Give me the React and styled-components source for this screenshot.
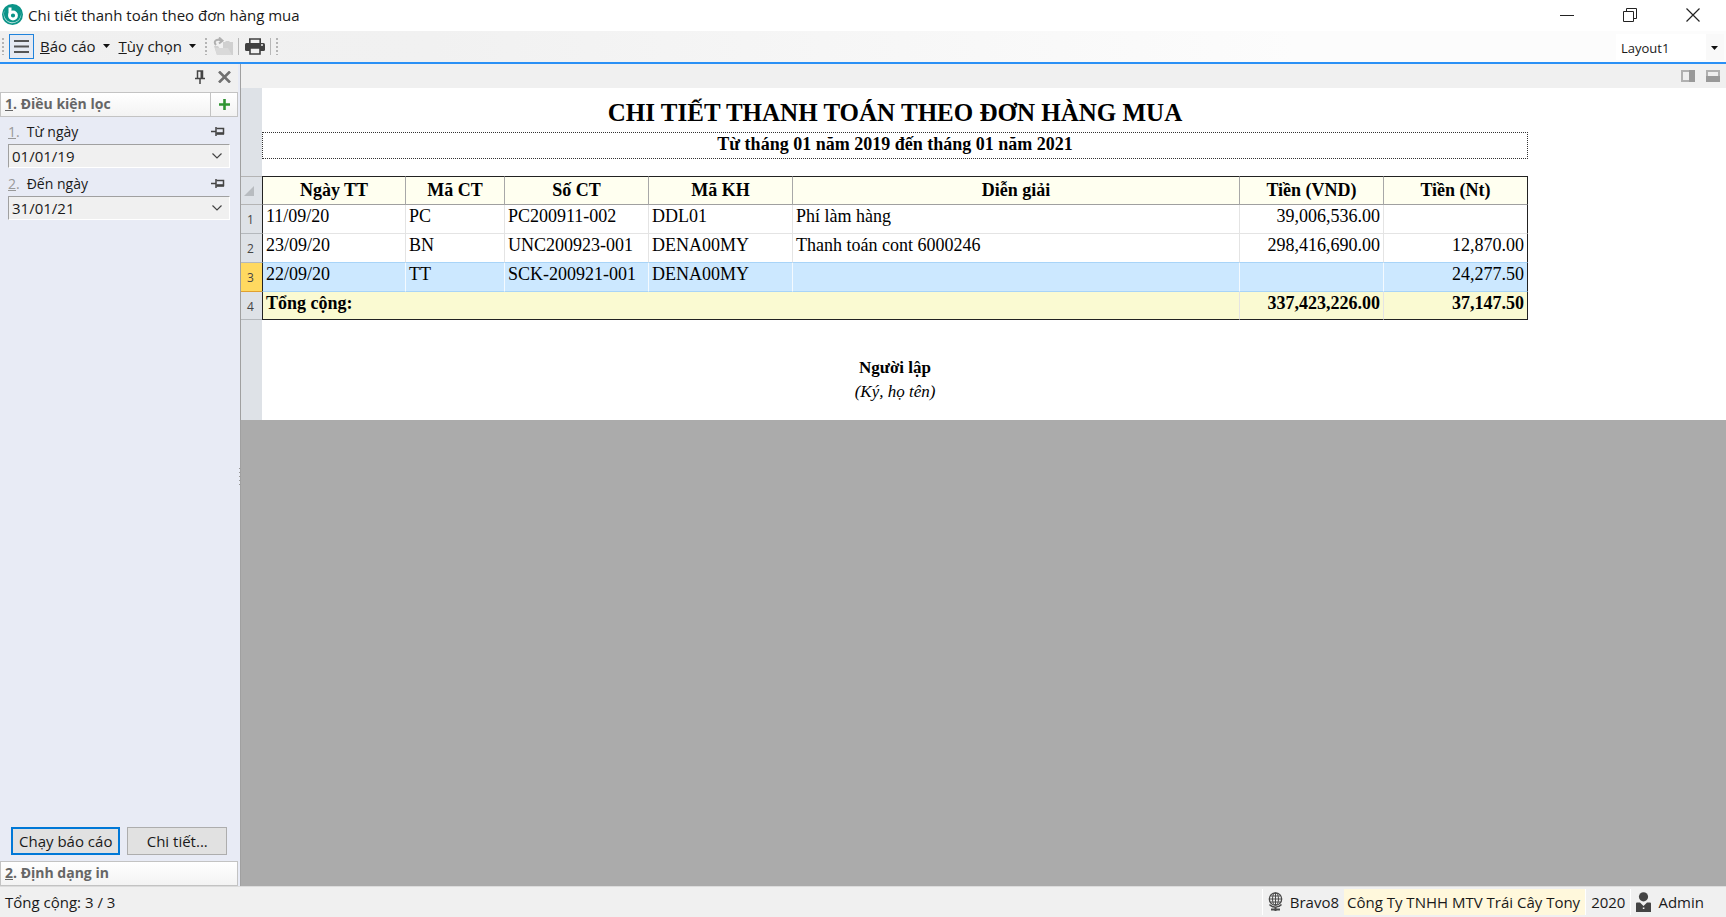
import React from 'react';
import styled, { createGlobalStyle, css } from 'styled-components';

const GlobalStyle = createGlobalStyle`
  * { box-sizing: border-box; }
  html, body, #root { height: 100%; margin: 0; }
  body { overflow: hidden; background: #f0f0f0; }
  body, button, input, select {
    font-family: "Open Sans", "Noto Sans", sans-serif;
    font-size: 15px;
    line-height: 20px;
    color: #1a1a1a;
  }
  svg { display: block; flex: none; }
`;

const Window = styled.div`
  display: flex;
  flex-direction: column;
  height: 100vh;
`;

const TitleBar = styled.header`
  display: flex;
  align-items: center;
  gap: 5px;
  height: 31px;
  padding: 0 2px 2px;
  background: #fff;
`;

const WindowTitle = styled.h1`
  flex: 1;
  margin: 0;
  font-size: 15px;
  font-weight: 400;
`;

const PlainButton = styled.button`
  display: flex;
  align-items: center;
  justify-content: center;
  padding: 0;
  border: 0;
  background: none;
`;

const Captions = styled.div`
  display: flex;
`;

const CaptionButton = styled(PlainButton)`
  width: 63px;
  height: 28px;
`;

const ToolBar = styled.div`
  display: flex;
  align-items: center;
  height: 33px;
  padding: 0 2px;
  background: linear-gradient(to right, #f0f0f0, #f1f1f1 25%, #fcfcfc 75%);
  border-bottom: 2px solid #2a90f5;
`;

const Grip = styled.span`
  width: 2px;
  height: 17px;
  background: repeating-linear-gradient(#b4b4b4 0 2px, transparent 2px 4px);
`;

const Divider = styled.span`
  width: 1px;
  height: 17px;
  background: #b8b8b8;
`;

const ListButton = styled(PlainButton)`
  width: 25px;
  height: 25px;
  margin: 0 6px 0 5px;
  border: 1px solid #1f83dc;
  background: #e6eaf2;
`;

const MenuButton = styled(PlainButton)`
  gap: 7px;
  margin-right: 9px;
  padding-bottom: 2px;
`;

const IconButton = styled(PlainButton)`
  width: 31px;
  height: 25px;
`;

const EndGrip = styled(Grip)`
  margin-left: 5px;
`;

const LayoutBox = styled.label`
  position: relative;
  display: flex;
  width: 108px;
  height: 26px;
  margin-left: auto;
  background: linear-gradient(to right, #fff 90px, #f9f9f9 90px);
  svg { position: absolute; right: 6px; top: 12px; pointer-events: none; }
`;

const LayoutSelect = styled.select`
  width: 100%;
  padding: 2px 24px 0 5px;
  border: 0;
  background: none;
  appearance: none;
  font-size: 13px;
`;

const Body = styled.div`
  display: flex;
  flex: 1;
  min-height: 0;
`;

const SideBar = styled.aside`
  display: flex;
  flex-direction: column;
  width: 241px;
  padding-right: 2px;
  background: #e8ebf5;
  border-right: 1px solid #a0a0a0;
`;

const SideTools = styled.div`
  display: flex;
  align-items: center;
  justify-content: flex-end;
  gap: 13px;
  height: 28px;
  padding: 0 7px 2px 0;
  background: #f0f0f0;
`;

const SectionBar = styled.div`
  display: flex;
  height: 25px;
  border: 1px solid #c3c3c3;
  background: linear-gradient(#fff, #f3f3f3);
`;

const SectionButton = styled.button`
  flex: 1;
  padding: 0 4px 2px;
  border: 0;
  background: none;
  text-align: left;
  font-size: 14px;
  font-weight: 700;
  color: #666;
`;

const AddButton = styled(PlainButton)`
  width: 27px;
  padding-bottom: 1px;
  border-left: 1px solid #c3c3c3;
`;

const Filters = styled.div`
  display: flex;
  flex: 1;
  flex-direction: column;
  padding: 3px 8px 0;
`;

const FieldHead = styled.div`
  display: flex;
  align-items: center;
  gap: 7px;
  height: 24px;
  padding: 0 5px 1px 0;
  label { flex: 1; font-size: 14px; }
`;

const FieldNumber = styled.span`
  font-size: 14px;
  color: #999;
`;

const FieldBox = styled.div`
  display: flex;
  height: 24px;
  margin-bottom: 4px;
  border: 1px solid #fff;
  border-top-color: #a0a0a0;
  border-left-color: #a0a0a0;
  background: #f0f0f0;
`;

const FieldInput = styled.input`
  flex: 1;
  min-width: 0;
  padding: 0 3px;
  border: 0;
  background: none;
`;

const DropButton = styled(PlainButton)`
  width: 24px;
`;

const Actions = styled.div`
  display: flex;
  gap: 7px;
  padding: 0 11px 6px;
`;

const ActionButton = styled.button`
  width: ${(p) => (p.$primary ? 110 : 100)}px;
  height: 28px;
  padding: 0;
  border: ${(p) => (p.$primary ? '2px solid #0078d7' : '1px solid #adadad')};
  background: #e1e1e1;
`;

const Main = styled.main`
  position: relative;
  flex: 1;
  min-width: 0;
  background: #ababab;
`;

const ViewTools = styled.div`
  display: flex;
  align-items: center;
  justify-content: flex-end;
  gap: 11px;
  height: 24px;
  padding-right: 6px;
  background: #f0f0f0;
`;

const SplitGrip = styled.span`
  position: absolute;
  left: -2px;
  top: 404px;
  width: 1px;
  height: 20px;
  background: repeating-linear-gradient(#999 0 1px, transparent 1px 4px);
`;

const Sheet = styled.section`
  height: 332px;
  padding: 10px 198px 0 0;
  background: linear-gradient(to right, #dee2e7 21px, #fff 21px);
  font-family: "Liberation Serif", serif;
  font-size: 18px;
  color: #000;
`;

const ReportTitle = styled.h2`
  margin: 0 0 4px 21px;
  font-size: 25px;
  line-height: 30px;
  text-align: center;
`;

const Period = styled.p`
  height: 27px;
  margin: 0 0 17px 21px;
  border: 1px dotted #333;
  font-weight: 700;
  line-height: 22px;
  text-align: center;
`;

const Grid = styled.table`
  width: 100%;
  table-layout: fixed;
  border-spacing: 0;
`;

const Col = styled.col`
  width: ${(p) => (p.$w ? `${p.$w}px` : 'auto')};
`;

const frame = css`
  &:nth-child(2) { border-left: 1px solid #222; }
  &:last-child { border-right: 1px solid #222; }
`;

const HeadCell = styled.th`
  height: 29px;
  padding: 0 0 2px;
  border-top: 1px solid #222;
  border-right: 1px solid #a8a8a8;
  border-bottom: 1px solid #a0a0a0;
  background: #fffff0;
  line-height: 20px;
  ${frame}
`;

const CornerCell = styled.td`
  padding: 0 0 0 3px;
  border-top: 1px solid #b4b4b4;
  border-bottom: 1px solid #b4b4b4;
`;

const RowNumber = styled.th`
  padding: 2px 2px 0 0;
  border-bottom: 1px solid ${(p) => (p.$current ? '#e0a030' : '#b4b8bc')};
  background: ${(p) => (p.$current ? '#ffd960' : 'transparent')};
  font-family: "Open Sans", "Noto Sans", sans-serif;
  font-size: 12px;
  font-weight: 400;
  color: #444;
`;

const Cell = styled.td`
  height: ${(p) => (p.$total ? 28 : 29)}px;
  padding: 1px 3px 0;
  border-right: 1px solid ${(p) => (p.$current ? '#f4faff' : '#e4e4e4')};
  border-bottom: 1px solid ${(p) => (p.$total ? '#222' : p.$edge ? '#a8d4f8' : '#e4e4e4')};
  background: ${(p) => (p.$total ? '#fafad2' : p.$current ? '#cce8ff' : '#fff')};
  font-weight: ${(p) => (p.$total ? 700 : 400)};
  line-height: 20px;
  text-align: ${(p) => (p.$number ? 'right' : 'left')};
  vertical-align: top;
  white-space: nowrap;
  ${frame}
`;

const Signature = styled.div`
  padding: 36px 0 0 21px;
  text-align: center;
  font-size: 17px;
  line-height: 24px;
  strong, em { display: block; }
`;

const StatusBar = styled.footer`
  display: flex;
  align-items: center;
  height: 31px;
  padding: 0 17px 0 5px;
  border-top: 1px solid #dcdcdc;
  background: #f0f0f0;
`;

const StatusCount = styled.span`
  flex: 1;
`;

const StatusItem = styled.span`
  display: flex;
  align-items: center;
  gap: 7px;
  height: 26px;
  padding: 0 5px;
  border-left: 1px solid #fff;
`;

const Company = styled(StatusItem)`
  padding: 0 5px 0 3px;
  border: 0;
  background: #fff8dc;
`;

const Caret = () => (
  <svg width="7" height="4" viewBox="0 0 7 4"><path d="M0 0h7L3.500 4z" fill="#111" /></svg>
);

const Logo = () => (
  <svg width="21" height="21" viewBox="0 0 21 21">
    <circle cx="10.500" cy="10.500" r="10.500" fill="#0b9488" />
    <path d="M3.500 5A8.800 8.800 0 1 0 18.500 7 8.500 8.500 0 1 1 3.500 5z" fill="#fff" opacity=".8" />
    <path d="M8 3.500v9" stroke="#fff" strokeWidth="3" />
    <circle cx="11" cy="11.500" r="3.500" fill="#0b9488" stroke="#fff" strokeWidth="2.800" />
  </svg>
);

const PinIcon = () => (
  <svg width="10" height="14" viewBox="0 0 10 14" fill="none" stroke="#444">
    <path d="M2.500 8V1h5v7" strokeWidth="1.500" />
    <path d="M6.500 1v7" strokeWidth="2" />
    <path d="M0 8.500h10M5 9v5" strokeWidth="1.500" />
  </svg>
);

const SidePinIcon = () => (
  <svg width="14" height="11" viewBox="0 0 14 11" fill="none" stroke="#444">
    <path d="M0 5.500h5M5 1v9" strokeWidth="1.500" />
    <path d="M5.500 2.500h7v5h-7" strokeWidth="1.500" />
    <path d="M5.500 7.500h7.500" strokeWidth="2.500" />
  </svg>
);

const CrossIcon = () => (
  <svg width="13" height="12" viewBox="0 0 13 12" stroke="#707070" strokeWidth="2.600">
    <path d="M1 .5l11 11M12 .5l-11 11" />
  </svg>
);

const FolderIcon = () => (
  <svg width="20" height="19" viewBox="0 0 20 19">
    <path d="M1 9h4l2 3h3V5h2l1-1h3l1 1h3v13H4z" fill="#d0d0d0" />
    <path d="M2 11h13l4 7H4z" fill="#d9d9d9" />
    <path d="M3 8C-.5 4 4 1.500 8 3.500M6 .5l3.500 3.200L6 6.500" fill="none" stroke="#b0b0b0" strokeWidth="2" />
  </svg>
);

const PrinterIcon = () => (
  <svg width="20" height="17" viewBox="0 0 20 17">
    <path d="M4.800 5V1h10.400v4" fill="#f0f0f0" stroke="#404040" strokeWidth="1.600" />
    <rect x="0" y="5" width="20" height="8" rx="1.500" fill="#404040" />
    <circle cx="17" cy="7" r="1" fill="#f0f0f0" />
    <path d="M5 10h10v6H5z" fill="#f0f0f0" stroke="#404040" strokeWidth="1.600" />
  </svg>
);

const GlobeIcon = () => (
  <svg width="15" height="20" viewBox="0 0 15 20" fill="none" stroke="#4a4a4a">
    <circle cx="7.500" cy="7" r="6.200" strokeWidth="1.300" />
    <ellipse cx="7.500" cy="7" rx="3" ry="6.200" />
    <path d="M7.500 1v12M1.500 7h12M2.500 4h10M2.500 10h10" />
    <path d="M1.500 12.500c3 3.500 9 3.500 12 0" strokeWidth="1.400" />
    <path d="M7.500 15v4M3 17.500h9" strokeWidth="2" />
  </svg>
);

const UserIcon = () => (
  <svg width="15" height="20" viewBox="0 0 15 20" fill="#444">
    <circle cx="7.500" cy="4.800" r="4.600" />
    <path d="M1 10.500h3l3.500 3.500 3.500-3.500h3q1 0 1 1V20H0v-8.500q0-1 1-1z" />
    <path d="M6.800 15.500h1.600v1.500H6.800z" fill="#f0f0f0" />
  </svg>
);

const columns = [
  { title: 'Ngày TT', width: 144 },
  { title: 'Mã CT', width: 99 },
  { title: 'Số CT', width: 144 },
  { title: 'Mã KH', width: 144 },
  { title: 'Diễn giải' },
  { title: 'Tiền (VND)', width: 144, number: true },
  { title: 'Tiền (Nt)', width: 144, number: true },
];

const rows = [
  ['11/09/20', 'PC', 'PC200911-002', 'DDL01', 'Phí làm hàng', '39,006,536.00', ''],
  ['23/09/20', 'BN', 'UNC200923-001', 'DENA00MY', 'Thanh toán cont 6000246', '298,416,690.00', '12,870.00'],
  ['22/09/20', 'TT', 'SCK-200921-001', 'DENA00MY', '', '', '24,277.50'],
];
const currentRow = 2;

function DateField({ id, number, label, value }) {
  return (
    <div>
      <FieldHead>
        <FieldNumber><u>{number}</u>.</FieldNumber>
        <label htmlFor={id}>{label}</label>
        <PlainButton aria-label="Ghim"><SidePinIcon /></PlainButton>
      </FieldHead>
      <FieldBox>
        <FieldInput id={id} defaultValue={value} />
        <DropButton aria-label="Chọn ngày">
          <svg width="10" height="6" viewBox="0 0 10 6" fill="none" stroke="#444" strokeWidth="1.200"><path d="M.5 .5L5 5 9.500 .5" /></svg>
        </DropButton>
      </FieldBox>
    </div>
  );
}

function ReportGrid() {
  return (
    <Grid>
      <colgroup>
        <Col $w={21} />
        {columns.map((c) => <Col key={c.title} $w={c.width} />)}
      </colgroup>
      <thead>
        <tr>
          <CornerCell>
            <svg width="10" height="10" viewBox="0 0 10 10"><path d="M10 0v10H0z" fill="#b8bcc0" /></svg>
          </CornerCell>
          {columns.map((c) => <HeadCell key={c.title} scope="col">{c.title}</HeadCell>)}
        </tr>
      </thead>
      <tbody>
        {rows.map((row, r) => (
          <tr key={row[2]}>
            <RowNumber scope="row" $current={r === currentRow}>{r + 1}</RowNumber>
            {row.map((text, c) => (
              <Cell
                key={columns[c].title}
                $number={columns[c].number}
                $current={r === currentRow}
                $edge={r === currentRow || r === currentRow - 1}
              >
                {text}
              </Cell>
            ))}
          </tr>
        ))}
        <tr>
          <RowNumber scope="row">4</RowNumber>
          <Cell $total colSpan={5}>Tổng cộng:</Cell>
          <Cell $total $number>337,423,226.00</Cell>
          <Cell $total $number>37,147.50</Cell>
        </tr>
      </tbody>
    </Grid>
  );
}

export default function App() {
  return (
    <Window>
      <GlobalStyle />
      <TitleBar>
        <Logo />
        <WindowTitle>Chi tiết thanh toán theo đơn hàng mua</WindowTitle>
        <Captions>
          <CaptionButton aria-label="Thu nhỏ">
            <svg width="14" height="14" viewBox="0 0 14 14" stroke="#222"><path d="M0 7.500h14" /></svg>
          </CaptionButton>
          <CaptionButton aria-label="Khôi phục">
            <svg width="14" height="14" viewBox="0 0 14 14" fill="none" stroke="#222"><path d="M.5 3.500h10v10H.5zM3.500 3.500v-3h10v10h-3" /></svg>
          </CaptionButton>
          <CaptionButton aria-label="Đóng">
            <svg width="14" height="14" viewBox="0 0 14 14" stroke="#222" strokeWidth="1.200"><path d="M.5 .5l13 13M13.500 .5l-13 13" /></svg>
          </CaptionButton>
        </Captions>
      </TitleBar>

      <ToolBar>
        <Grip />
        <ListButton aria-label="Danh sách">
          <svg width="15" height="15" viewBox="0 0 15 15" stroke="#555" strokeWidth="2"><path d="M0 2h15M0 7.500h15M0 13h15" /></svg>
        </ListButton>
        <MenuButton><span><u>B</u>áo cáo</span><Caret /></MenuButton>
        <MenuButton><span><u>T</u>ùy chọn</span><Caret /></MenuButton>
        <Grip />
        <IconButton aria-label="Mở" disabled><FolderIcon /></IconButton>
        <Divider />
        <IconButton aria-label="In"><PrinterIcon /></IconButton>
        <Divider />
        <EndGrip />
        <LayoutBox>
          <LayoutSelect aria-label="Layout" defaultValue="Layout1"><option>Layout1</option></LayoutSelect>
          <Caret />
        </LayoutBox>
      </ToolBar>

      <Body>
        <SideBar>
          <SideTools>
            <PlainButton aria-label="Ghim bảng"><PinIcon /></PlainButton>
            <PlainButton aria-label="Đóng bảng"><CrossIcon /></PlainButton>
          </SideTools>
          <SectionBar>
            <SectionButton><u>1</u>. Điều kiện lọc</SectionButton>
            <AddButton aria-label="Thêm điều kiện">
              <svg width="11" height="11" viewBox="0 0 11 11" stroke="#2f9432" strokeWidth="2.600"><path d="M0 5.500h11M5.500 0v11" /></svg>
            </AddButton>
          </SectionBar>
          <Filters>
            <DateField id="from" number="1" label="Từ ngày" value="01/01/19" />
            <DateField id="to" number="2" label="Đến ngày" value="31/01/21" />
          </Filters>
          <Actions>
            <ActionButton $primary>Chạy báo cáo</ActionButton>
            <ActionButton>Chi tiết...</ActionButton>
          </Actions>
          <SectionBar>
            <SectionButton><u>2</u>. Định dạng in</SectionButton>
          </SectionBar>
        </SideBar>

        <Main>
          <SplitGrip />
          <ViewTools>
            <PlainButton aria-label="Khung phải">
              <svg width="14" height="12" viewBox="0 0 14 12"><path d="M1 1h12v10H1z" fill="#eee" stroke="#b0b0b0" strokeWidth="2" /><path d="M8 0h6v12H8z" fill="#999" /></svg>
            </PlainButton>
            <PlainButton aria-label="Khung dưới">
              <svg width="14" height="12" viewBox="0 0 14 12"><path d="M1 1h12v10H1z" fill="#eee" stroke="#b0b0b0" strokeWidth="2" /><path d="M0 6h14v6H0z" fill="#999" /></svg>
            </PlainButton>
          </ViewTools>
          <Sheet>
            <ReportTitle>CHI TIẾT THANH TOÁN THEO ĐƠN HÀNG MUA</ReportTitle>
            <Period>Từ tháng 01 năm 2019 đến tháng 01 năm 2021</Period>
            <ReportGrid />
            <Signature>
              <strong>Người lập</strong>
              <em>(Ký, họ tên)</em>
            </Signature>
          </Sheet>
        </Main>
      </Body>

      <StatusBar>
        <StatusCount>Tổng cộng: 3 / 3</StatusCount>
        <StatusItem><GlobeIcon />Bravo8</StatusItem>
        <Company>Công Ty TNHH MTV Trái Cây Tony</Company>
        <StatusItem>2020</StatusItem>
        <StatusItem><UserIcon />Admin</StatusItem>
      </StatusBar>
    </Window>
  );
}
